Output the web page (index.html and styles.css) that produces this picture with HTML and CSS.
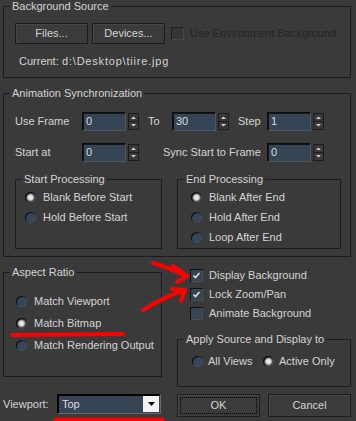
FILE: index.html
```html
<!DOCTYPE html>
<html>
<head>
<meta charset="utf-8">
<title>Viewport Background</title>
<link rel="stylesheet" href="styles.css">
</head>
<body>
<div class="dialog">
  <fieldset class="group">
    <legend>Background Source</legend>
    <div class="src-row">
      <button class="btn btn-src">Files...</button>
      <button class="btn btn-src">Devices...</button>
      <span class="check disabled"><span class="cbox"></span><span>Use Environment Background</span></span>
    </div>
    <div class="current"><span class="cur-label">Current:</span><span class="cur-path">d:\Desktop\tiire.jpg</span></div>
  </fieldset>

  <fieldset class="group g-sync">
    <legend>Animation Synchronization</legend>
    <div class="sync-row first">
      <span class="lbl lbl-a">Use Frame</span>
      <span class="spinner"><span class="spin-input">0</span><svg class="spin-arrows" width="11" height="17" viewBox="0 0 11 17"><rect x="0.5" y="0.5" width="10" height="16" fill="#383838" stroke="#1c1c1c"/><line x1="1" y1="8.5" x2="10" y2="8.5" stroke="#1c1c1c"/><path d="M5.5 3.5 L8 6 L3 6 Z" fill="#d0d0d0"/><path d="M3 11 L8 11 L5.5 13.5 Z" fill="#d0d0d0"/></svg></span>
      <span class="lbl lbl-to">To</span>
      <span class="spinner"><span class="spin-input">30</span><svg class="spin-arrows" width="11" height="17" viewBox="0 0 11 17"><rect x="0.5" y="0.5" width="10" height="16" fill="#383838" stroke="#1c1c1c"/><line x1="1" y1="8.5" x2="10" y2="8.5" stroke="#1c1c1c"/><path d="M5.5 3.5 L8 6 L3 6 Z" fill="#d0d0d0"/><path d="M3 11 L8 11 L5.5 13.5 Z" fill="#d0d0d0"/></svg></span>
      <span class="lbl lbl-step">Step</span>
      <span class="spinner"><span class="spin-input">1</span><svg class="spin-arrows" width="11" height="17" viewBox="0 0 11 17"><rect x="0.5" y="0.5" width="10" height="16" fill="#383838" stroke="#1c1c1c"/><line x1="1" y1="8.5" x2="10" y2="8.5" stroke="#1c1c1c"/><path d="M5.5 3.5 L8 6 L3 6 Z" fill="#d0d0d0"/><path d="M3 11 L8 11 L5.5 13.5 Z" fill="#d0d0d0"/></svg></span>
    </div>
    <div class="sync-row">
      <span class="lbl lbl-a">Start at</span>
      <span class="spinner"><span class="spin-input">0</span><svg class="spin-arrows" width="11" height="17" viewBox="0 0 11 17"><rect x="0.5" y="0.5" width="10" height="16" fill="#383838" stroke="#1c1c1c"/><line x1="1" y1="8.5" x2="10" y2="8.5" stroke="#1c1c1c"/><path d="M5.5 3.5 L8 6 L3 6 Z" fill="#d0d0d0"/><path d="M3 11 L8 11 L5.5 13.5 Z" fill="#d0d0d0"/></svg></span>
      <span class="lbl lbl-sync">Sync Start to Frame</span>
      <span class="spinner"><span class="spin-input">0</span><svg class="spin-arrows" width="11" height="17" viewBox="0 0 11 17"><rect x="0.5" y="0.5" width="10" height="16" fill="#383838" stroke="#1c1c1c"/><line x1="1" y1="8.5" x2="10" y2="8.5" stroke="#1c1c1c"/><path d="M5.5 3.5 L8 6 L3 6 Z" fill="#d0d0d0"/><path d="M3 11 L8 11 L5.5 13.5 Z" fill="#d0d0d0"/></svg></span>
    </div>
    <div class="proc-row">
      <fieldset class="group sub sub-start">
        <legend>Start Processing</legend>
        <div class="radio-list">
          <span class="opt"><span class="radio on"></span>Blank Before Start</span>
          <span class="opt"><span class="radio"></span>Hold Before Start</span>
        </div>
      </fieldset>
      <fieldset class="group sub sub-end">
        <legend>End Processing</legend>
        <div class="radio-list">
          <span class="opt"><span class="radio on"></span>Blank After End</span>
          <span class="opt"><span class="radio"></span>Hold After End</span>
          <span class="opt"><span class="radio"></span>Loop After End</span>
        </div>
      </fieldset>
    </div>
  </fieldset>

  <div class="lower-row">
    <fieldset class="group g-aspect">
      <legend>Aspect Ratio</legend>
      <div class="aspect-list">
        <span class="opt"><span class="radio"></span>Match Viewport</span>
        <span class="opt"><span class="radio on"></span>Match Bitmap</span>
        <span class="opt"><span class="radio"></span>Match Rendering Output</span>
      </div>
    </fieldset>
    <div class="right-col">
      <div class="checks">
        <span class="check"><span class="cbox"><svg width="13" height="13" viewBox="0 0 13 13"><path d="M3.5 6.5 L5.5 8.5 L9.5 4" fill="none" stroke="#e2e2e2" stroke-width="1.6"/></svg></span><span>Display Background</span></span>
        <span class="check"><span class="cbox"><svg width="13" height="13" viewBox="0 0 13 13"><path d="M3.5 6.5 L5.5 8.5 L9.5 4" fill="none" stroke="#e2e2e2" stroke-width="1.6"/></svg></span><span>Lock Zoom/Pan</span></span>
        <span class="check"><span class="cbox"></span><span>Animate Background</span></span>
      </div>
      <fieldset class="group g-apply">
        <legend>Apply Source and Display to</legend>
        <div class="apply-row">
          <span class="opt opt-all"><span class="radio"></span>All Views</span>
          <span class="opt"><span class="radio on"></span>Active Only</span>
        </div>
      </fieldset>
    </div>
  </div>

  <div class="bottom-row">
    <span class="vp-label">Viewport:</span>
    <span class="dropdown"><span>Top</span><span class="dd-btn"><svg width="9" height="5" viewBox="0 0 9 5"><path d="M1 0 L8 0 L4.5 4 Z" fill="#000"/></svg></span></span>
    <button class="btn btn-dlg btn-ok">OK</button>
    <button class="btn btn-dlg btn-cancel">Cancel</button>
  </div>

  <svg class="annot" width="356" height="421" viewBox="0 0 356 421">
    <g fill="none" stroke="#ff0000" stroke-linecap="round" stroke-linejoin="round">
      <path d="M153 263 Q168 267 186 276" stroke-width="4"/>
      <path d="M173 266 L187 276 L177 282" stroke-width="4"/>
      <path d="M143 310 Q164 297 185 290" stroke-width="4"/>
      <path d="M172 289 L185 290 L181 301" stroke-width="4"/>
      <path d="M12 335 L123 334" stroke-width="4"/>
      <path d="M56 420 L162 420" stroke-width="5"/>
    </g>
  </svg>
</div>
</body>
</html>
```

FILE: styles.css
```css
* {
  box-sizing: border-box;
}

html, body {
  margin: 0;
  padding: 0;
}

body {
  width: 356px;
  height: 421px;
  overflow: hidden;
  background: #3a3a3a;
  color: #d4d4d4;
  font-family: "Liberation Sans", Arial, sans-serif;
  font-size: 11px;
  line-height: 13px;
}

.dialog {
  position: relative;
  display: flex;
  flex-direction: column;
  padding: 0 5px 0 3px;
  height: 421px;
}

fieldset.group {
  margin: 0;
  padding: 0;
  min-width: 0;
  border: 1px solid #1d1d1d;
}

legend {
  margin-left: 6px;
  padding: 0 2px;
  height: 13px;
  line-height: 13px;
}

/* Background source */
.src-row {
  display: flex;
  align-items: center;
  margin-top: 10px;
  padding-left: 11px;
}

.btn {
  font: inherit;
  color: #d4d4d4;
  background: #3b3b3b;
  border: 1px solid #1c1c1c;
  box-shadow: inset 1px 1px 0 #474747;
  padding: 0;
  margin: 0;
}

.btn-src {
  width: 73px;
  height: 21px;
}

.btn-src + .btn-src {
  margin-left: 4px;
}

.check {
  display: flex;
  align-items: center;
  gap: 6px;
}

.src-row .check {
  margin-left: 6px;
}

.cbox {
  width: 13px;
  height: 13px;
  flex: none;
  display: block;
  background: #354556;
  box-shadow: inset 1px 1px 0 #111, inset -1px -1px 0 #4c4c4c;
}

.cbox svg {
  display: block;
}

.check.disabled {
  color: #252525;
}

.check.disabled .cbox {
  background: #353535;
  box-shadow: inset 1px 1px 0 #1e1e1e, inset -1px -1px 0 #474747;
}

.current {
  display: flex;
  margin-top: 11px;
  padding: 0 0 9px 15px;
}

.cur-label {
  width: 43px;
}

.cur-path {
  letter-spacing: 0.8px;
}

/* Animation synchronization */
.g-sync {
  margin-top: 9px !important;
  padding-bottom: 7px !important;
}

.sync-row {
  display: flex;
  align-items: center;
  height: 19px;
  margin-top: 12px;
  padding-left: 11px;
}

.lbl {
  flex: none;
}

.lbl-a {
  width: 67px;
}

.lbl-to {
  width: 33px;
  padding-left: 9px;
}

.lbl-step {
  width: 38px;
  padding-left: 9px;
}

.lbl-sync {
  width: 128px;
  padding-left: 24px;
}

.spinner {
  display: flex;
  align-items: center;
  gap: 2px;
  flex: none;
}

.spin-input {
  width: 44px;
  height: 19px;
  padding: 2px 0 0 3px;
  background: #354556;
  border: 1px solid;
  border-color: #0c0c0c #555 #555 #0c0c0c;
  box-shadow: inset 1px 1px 0 #151515;
  color: #dcdcdc;
  line-height: 13px;
}

.spin-arrows {
  display: block;
}

.proc-row {
  display: flex;
  margin-top: 11px;
  padding-left: 11px;
}

.sub-start {
  width: 147px;
}

.sub-end {
  width: 164px;
  margin-left: 15px !important;
}

.radio-list {
  display: flex;
  flex-direction: column;
  margin-top: 1px;
  padding-bottom: 1px;
}

.sub-start .radio-list {
  padding-left: 9px;
}

.sub-end .radio-list {
  padding-left: 13px;
}

.opt {
  display: flex;
  align-items: center;
  gap: 7px;
}

.radio-list .opt {
  height: 20px;
}

.radio {
  width: 11px;
  height: 11px;
  flex: none;
  border-radius: 50%;
  background: #34465a;
  box-shadow: inset 1px 1px 0 #0e0e0e, inset -1px -1px 0 #4a4a4a;
}

.radio.on {
  background: radial-gradient(circle at 50% 50%, #f2f2f2 0, #dcdcdc 2.2px, #8c8c8c 3.4px, #262626 4.6px);
  box-shadow: inset 1px 1px 0 #0e0e0e, inset -1px -1px 0 #4a4a4a;
}

/* Lower part */
.lower-row {
  display: flex;
  align-items: flex-start;
  margin-top: 9px;
}

.g-aspect {
  width: 159px;
  flex: none;
}

.aspect-list {
  display: flex;
  flex-direction: column;
  margin-top: 11px;
  padding: 0 0 20px 12px;
}

.aspect-list .opt {
  height: 22px;
}

.right-col {
  flex: 1;
  margin-left: 15px;
  display: flex;
  flex-direction: column;
}

.checks {
  display: flex;
  flex-direction: column;
  padding-left: 13px;
}

.checks .check {
  height: 19px;
}

.g-apply {
  margin-top: 10px !important;
}

.apply-row {
  display: flex;
  align-items: center;
  height: 20px;
  margin-top: 5px;
  margin-bottom: 15px;
  padding-left: 14px;
}

.apply-row .opt {
  gap: 5px;
}

.opt-all {
  width: 71px;
}

/* Bottom */
.bottom-row {
  display: flex;
  align-items: flex-start;
  margin-top: 7px;
}

.vp-label {
  width: 54px;
  line-height: 20px;
  flex: none;
}

.dropdown {
  width: 104px;
  height: 20px;
  flex: none;
  display: flex;
  align-items: center;
  padding-left: 4px;
  background: #354556;
  border: 1px solid;
  border-color: #000 #6a6a6a #6a6a6a #000;
  box-shadow: inset 1px 1px 0 #000;
  color: #dcdcdc;
}

.dd-btn {
  margin-left: auto;
  margin-right: 1px;
  width: 16px;
  height: 16px;
  display: flex;
  align-items: center;
  justify-content: center;
  background: #f2f2f2;
}

.dd-btn svg {
  display: block;
}

.btn-dlg {
  width: 83px;
  height: 23px;
  flex: none;
}

.btn-ok {
  margin-left: 16px;
  outline: 1px dotted #000;
  outline-offset: -4px;
}

.btn-cancel {
  margin-left: 8px;
}

.annot {
  position: absolute;
  left: 0;
  top: 0;
  pointer-events: none;
}
```
